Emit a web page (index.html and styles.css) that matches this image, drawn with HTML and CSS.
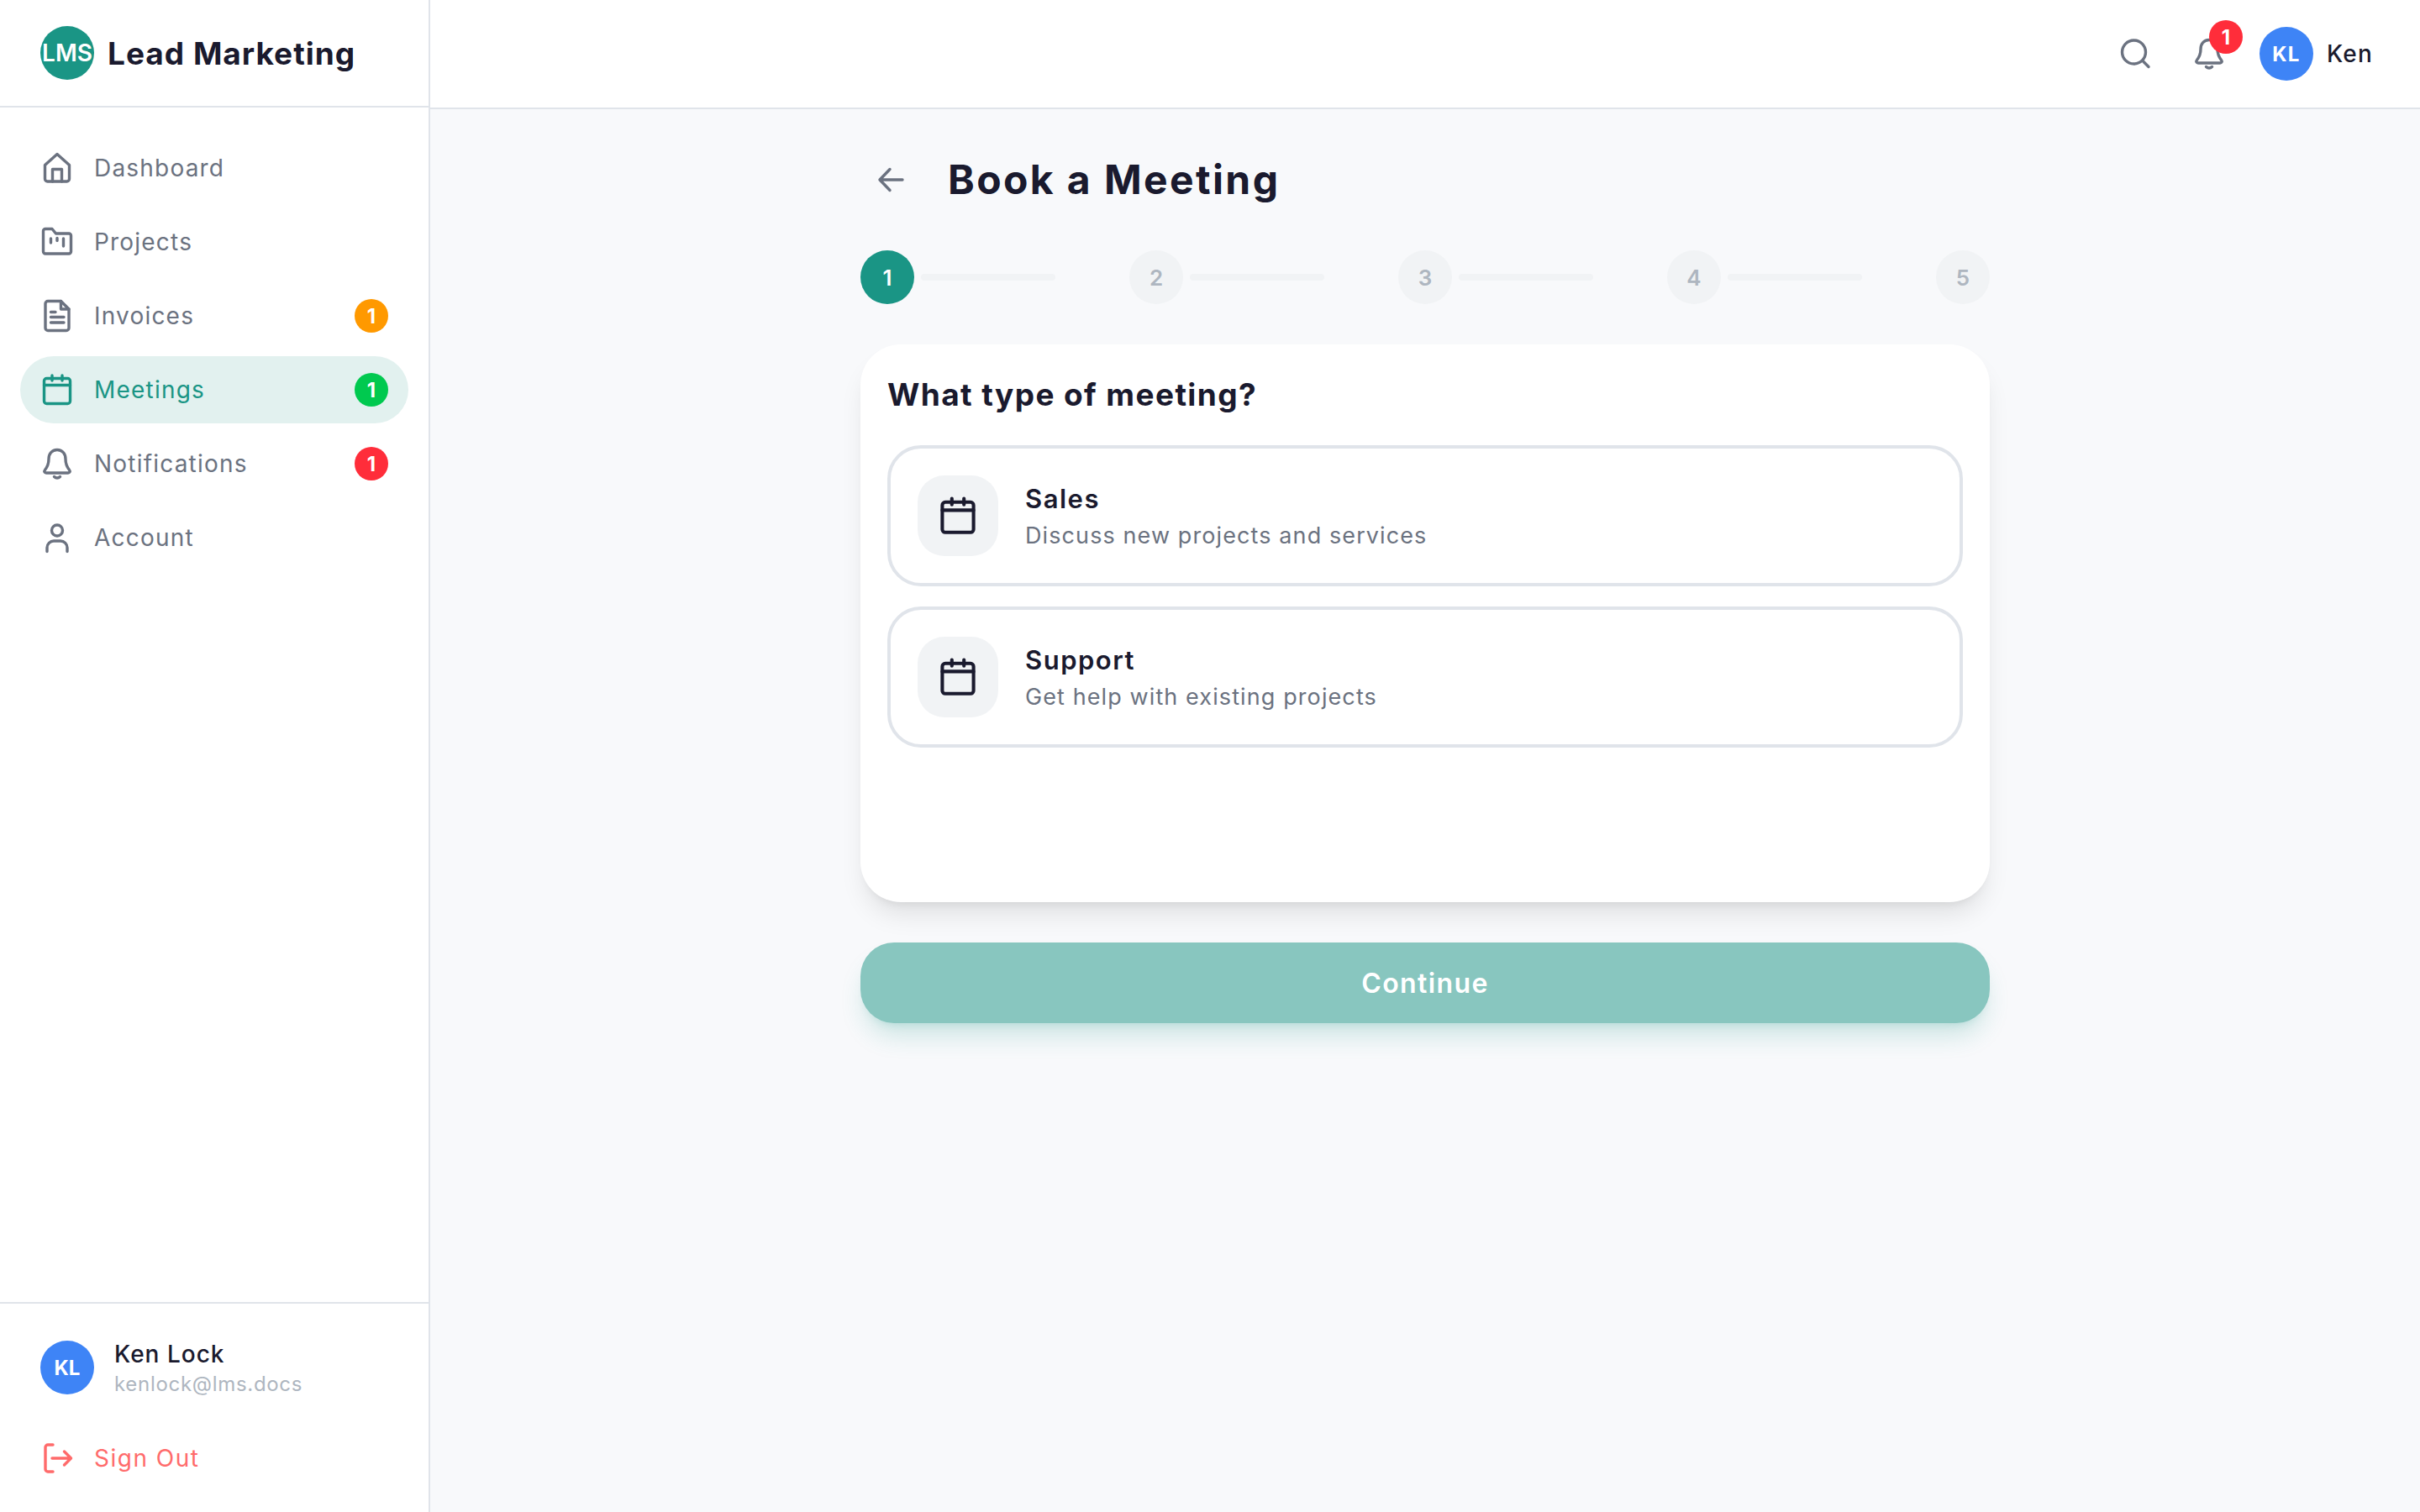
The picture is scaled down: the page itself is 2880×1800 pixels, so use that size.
FILE: index.html
```html
<!DOCTYPE html>
<html lang="en">
<head>
  <meta charset="UTF-8" />
  <meta name="viewport" content="width=device-width, initial-scale=1.0"/>
  <title>Book a Meeting - Lead Marketing</title>
  <link rel="stylesheet" href="styles.css">
</head>
<body>

  <svg class="icon-defs" aria-hidden="true">
    <symbol id="i-calendar" viewBox="0 0 40 40">
      <rect x="4.5" y="6.5" width="31" height="30" rx="3"/>
      <path d="M4.5 14.5H35.5M14 3V9M26 3V9"/>
    </symbol>
    <symbol id="i-bell" viewBox="0 0 40 40">
      <path d="M20 3.5C13.5 3.5 10 8.500 10 14.500C10 21.500 7.500 25 5.500 27.500C4.200 29.200 5 31 7 31H33C35 31 35.800 29.200 34.500 27.500C32.500 25 30 21.500 30 14.500C30 8.500 26.500 3.500 20 3.500Z"/>
      <path d="M16.500 35.500C18.500 37.500 21.500 37.500 23.500 35.500"/>
    </symbol>
  </svg>

  <div class="app">
    <aside class="sidebar">
      <div class="brand">
        <div class="brand-logo">LMS</div>
        <div class="brand-name">Lead Marketing</div>
      </div>

      <nav class="nav">
        <a class="nav-item">
          <svg class="icon" viewBox="0 0 40 40"><path d="M5.500 16.500L20 3.500L34.500 16.500V33a3 3 0 0 1-3 3H8.500a3 3 0 0 1-3-3Z"/><path d="M14.500 36V21.500H25.500V36"/></svg>
          <span>Dashboard</span>
        </a>
        <a class="nav-item">
          <svg class="icon" viewBox="0 0 40 40"><path d="M3.500 7a2.500 2.500 0 0 1 2.500-2.500H14L18.500 10H34a2.500 2.500 0 0 1 2.500 2.500V31.500a2.500 2.500 0 0 1-2.500 2.500H6a2.500 2.500 0 0 1-2.500-2.500Z"/><path d="M12.500 16V21M20 15.500V18.500M27.500 16V25"/></svg>
          <span>Projects</span>
        </a>
        <a class="nav-item">
          <svg class="icon" viewBox="0 0 40 40"><path d="M24.500 2.500H9a3 3 0 0 0-3 3V34.500a3 3 0 0 0 3 3H31a3 3 0 0 0 3-3V12Z"/><path d="M24.500 2.500V12H34M12.500 15.500H18M12.500 21.500H28M12.500 28H28"/></svg>
          <span>Invoices</span>
          <b class="badge badge-orange">1</b>
        </a>
        <a class="nav-item active">
          <svg class="icon"><use href="#i-calendar"/></svg>
          <span>Meetings</span>
          <b class="badge badge-green">1</b>
        </a>
        <a class="nav-item">
          <svg class="icon"><use href="#i-bell"/></svg>
          <span>Notifications</span>
          <b class="badge badge-red">1</b>
        </a>
        <a class="nav-item">
          <svg class="icon" viewBox="0 0 40 40"><circle cx="20" cy="11.500" r="6.500"/><path d="M8 36.500V32a8 8 0 0 1 8-8H24a8 8 0 0 1 8 8V36.500"/></svg>
          <span>Account</span>
        </a>
      </nav>

      <div class="side-foot">
        <div class="side-user">
          <div class="avatar">KL</div>
          <div class="side-user-text">
            <div class="side-user-name">Ken Lock</div>
            <div class="side-user-mail">kenlock@lms.docs</div>
          </div>
        </div>
        <a class="nav-item signout">
          <svg class="icon" viewBox="0 0 40 40"><path d="M15 4H9a3 3 0 0 0-3 3V33a3 3 0 0 0 3 3H15"/><path d="M14 20H36M28.500 12L36.500 20L28.500 28"/></svg>
          <span>Sign Out</span>
        </a>
      </div>
    </aside>

    <div class="main">
      <header class="topbar">
        <a class="top-btn">
          <svg class="icon" viewBox="0 0 40 40"><circle cx="18.500" cy="18" r="14"/><path d="M29 28.500L36 35.500"/></svg>
        </a>
        <a class="top-btn bell">
          <svg class="icon"><use href="#i-bell"/></svg>
          <b class="badge badge-red bell-count">1</b>
        </a>
        <div class="top-user">
          <div class="avatar">KL</div>
          <span>Ken</span>
        </div>
      </header>

      <main class="content">
        <div class="page-title">
          <a class="back">
            <svg class="icon" viewBox="0 0 40 40"><path d="M34 20H8M19 7.500L7 20L19 32.500"/></svg>
          </a>
          <h1>Book a Meeting</h1>
        </div>

        <div class="stepper">
          <div class="step current"><div class="step-num">1</div><div class="step-line"></div></div>
          <div class="step"><div class="step-num">2</div><div class="step-line"></div></div>
          <div class="step"><div class="step-num">3</div><div class="step-line"></div></div>
          <div class="step"><div class="step-num">4</div><div class="step-line"></div></div>
          <div class="step"><div class="step-num">5</div></div>
        </div>

        <section class="card">
          <h2>What type of meeting?</h2>
          <div class="option">
            <div class="option-icon"><svg class="icon-lg"><use href="#i-calendar"/></svg></div>
            <div class="option-text">
              <div class="option-title">Sales</div>
              <div class="option-desc">Discuss new projects and services</div>
            </div>
          </div>
          <div class="option">
            <div class="option-icon"><svg class="icon-lg"><use href="#i-calendar"/></svg></div>
            <div class="option-text">
              <div class="option-title">Support</div>
              <div class="option-desc">Get help with existing projects</div>
            </div>
          </div>
        </section>

        <button class="continue" type="button">Continue</button>
      </main>
    </div>
  </div>

</body>
</html>
```

FILE: styles.css
```css
:root {
  --teal: #1a9585;
  --ink: #1a1a2e;
  --grey: #6b7280;
  --line: #e0e4ea;
  --bg: #f8f9fb;
}

* {
  box-sizing: border-box;
}

body {
  margin: 0;
  font-family: Inter, "Liberation Sans", sans-serif;
  color: var(--ink);
  background-color: var(--bg);
}

.icon-defs {
  display: none;
}

.app {
  display: flex;
  height: 1800px;
}

.icon, .icon-lg {
  fill: none;
  stroke: currentColor;
  stroke-width: 3.4;
  stroke-linecap: round;
  stroke-linejoin: round;
  flex-shrink: 0;
}

.icon {
  width: 40px;
  height: 40px;
}

.icon-lg {
  width: 48px;
  height: 48px;
}

/* sidebar */
.sidebar {
  width: 512px;
  display: flex;
  flex-direction: column;
  background-color: #fff;
  border-right: 2px solid var(--line);
}

.brand {
  height: 128px;
  display: flex;
  align-items: center;
  gap: 16px;
  padding-left: 48px;
  border-bottom: 2px solid var(--line);
}

.brand-logo {
  width: 64px;
  height: 64px;
  border-radius: 50%;
  background-color: var(--teal);
  color: #fff;
  font-size: 28px;
  font-weight: 600;
  display: flex;
  align-items: center;
  justify-content: center;
}

.brand-name {
  font-size: 37px;
  font-weight: 700;
  letter-spacing: 1px;
}

.nav {
  display: flex;
  flex-direction: column;
  gap: 8px;
  padding: 32px 24px 0;
}

.nav-item {
  height: 80px;
  display: flex;
  align-items: center;
  gap: 24px;
  padding: 0 24px;
  border-radius: 40px;
  color: var(--grey);
  font-size: 28px;
  letter-spacing: 1.2px;
}

.nav-item.active {
  background-color: #e2f1ef;
  color: var(--teal);
}

.badge {
  width: 40px;
  height: 40px;
  margin-left: auto;
  border-radius: 50%;
  color: #fff;
  font-size: 24px;
  font-weight: 700;
  letter-spacing: 0;
  display: flex;
  align-items: center;
  justify-content: center;
}

.badge-orange { background-color: #ff9900; }
.badge-green { background-color: #00c94f; }
.badge-red { background-color: #ff2d3a; }

.side-foot {
  margin-top: auto;
  padding: 44px 24px 24px;
  border-top: 2px solid var(--line);
}

.side-user {
  height: 64px;
  display: flex;
  align-items: center;
  gap: 24px;
  padding-left: 24px;
  margin-bottom: 36px;
}

.side-user-text {
  padding-top: 4px;
}

.avatar {
  width: 64px;
  height: 64px;
  border-radius: 50%;
  background-color: #3e84f6;
  color: #fff;
  font-size: 24px;
  font-weight: 700;
  display: flex;
  align-items: center;
  justify-content: center;
}

.side-user-name {
  font-size: 28px;
  line-height: 36px;
  font-weight: 500;
  letter-spacing: 1px;
}

.side-user-mail {
  font-size: 24px;
  line-height: 36px;
  color: #aeb6c0;
  letter-spacing: 0.7px;
}

.signout {
  color: #ff6b6b;
  letter-spacing: 1.5px;
}

/* top bar */
.main {
  flex: 1;
  display: flex;
  flex-direction: column;
}

.topbar {
  height: 130px;
  display: flex;
  align-items: center;
  justify-content: flex-end;
  padding-right: 56px;
  background-color: #fff;
  border-bottom: 2px solid var(--line);
}

.top-btn {
  display: flex;
  margin-right: 48px;
  color: var(--grey);
}

.bell {
  position: relative;
  margin-right: 40px;
}

.bell-count {
  position: absolute;
  top: -20px;
  right: -20px;
}

.top-user {
  display: flex;
  align-items: center;
  gap: 16px;
  font-size: 28px;
  font-weight: 500;
  letter-spacing: 1.2px;
}

/* page */
.content {
  width: 1344px;
  margin: 0 auto;
  padding-top: 48px;
}

.page-title {
  display: flex;
  align-items: center;
  gap: 32px;
}

.back {
  display: flex;
  padding: 16px;
  color: var(--grey);
}

h1 {
  margin: 0;
  font-size: 48px;
  line-height: 66px;
  font-weight: 700;
  letter-spacing: 2.4px;
}

.stepper {
  display: flex;
  justify-content: space-between;
  margin-top: 48px;
}

.step {
  display: flex;
  align-items: center;
  gap: 8px;
}

.step-num {
  width: 64px;
  height: 64px;
  border-radius: 50%;
  background-color: #f1f3f5;
  color: #aeb6c0;
  font-size: 26px;
  font-weight: 600;
  display: flex;
  align-items: center;
  justify-content: center;
}

.step.current .step-num {
  background-color: var(--teal);
  color: #fff;
}

.step-line {
  width: 160px;
  height: 8px;
  border-radius: 4px;
  background-color: #f1f3f5;
}

.card {
  height: 664px;
  margin-top: 48px;
  padding: 32px;
  background-color: #fff;
  border-radius: 48px;
  box-shadow: 0 20px 30px -6px rgba(0, 0, 0, 0.1), 0 8px 12px -8px rgba(0, 0, 0, 0.1);
}

h2 {
  margin: 0 0 32px;
  font-size: 37px;
  line-height: 56px;
  font-weight: 700;
  letter-spacing: 1.4px;
}

.option {
  height: 168px;
  display: flex;
  align-items: center;
  gap: 32px;
  padding: 0 32px;
  margin-bottom: 24px;
  border: 4px solid var(--line);
  border-radius: 40px;
}

.option-icon {
  width: 96px;
  height: 96px;
  border-radius: 32px;
  background-color: #f1f3f5;
  display: flex;
  align-items: center;
  justify-content: center;
}

.option-text {
  padding-top: 2px;
}

.option-title {
  font-size: 31px;
  line-height: 44px;
  font-weight: 600;
  letter-spacing: 1.5px;
}

.option-desc {
  margin-top: 2px;
  font-size: 27px;
  line-height: 40px;
  color: var(--grey);
  letter-spacing: 1.1px;
}

.continue {
  display: block;
  width: 100%;
  height: 96px;
  margin-top: 48px;
  border: none;
  border-radius: 40px;
  background-color: #88c6bf;
  color: #fff;
  font-family: inherit;
  font-size: 32px;
  font-weight: 600;
  letter-spacing: 1.4px;
  box-shadow: 0 20px 30px -6px rgba(26, 149, 133, 0.2), 0 8px 12px -8px rgba(26, 149, 133, 0.2);
}
```
